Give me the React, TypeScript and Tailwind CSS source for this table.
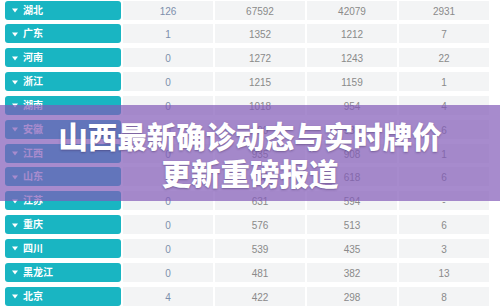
import React from 'react'

type Row = {
  name: string
  add: string
  total: string
  cured: string
  dead: string
}

const rows: Row[] = [
  { name: '湖北', add: '126', total: '67592', cured: '42079', dead: '2931' },
  { name: '广东', add: '1', total: '1352', cured: '1212', dead: '7' },
  { name: '河南', add: '0', total: '1272', cured: '1243', dead: '22' },
  { name: '浙江', add: '0', total: '1215', cured: '1159', dead: '1' },
  { name: '湖南', add: '0', total: '1018', cured: '954', dead: '4' },
  { name: '安徽', add: '0', total: '990', cured: '984', dead: '6' },
  { name: '江西', add: '0', total: '935', cured: '908', dead: '1' },
  { name: '山东', add: '0', total: '760', cured: '618', dead: '6' },
  { name: '江苏', add: '0', total: '631', cured: '594', dead: '-' },
  { name: '重庆', add: '0', total: '576', cured: '513', dead: '6' },
  { name: '四川', add: '0', total: '539', cured: '435', dead: '3' },
  { name: '黑龙江', add: '0', total: '481', cured: '382', dead: '13' },
  { name: '北京', add: '4', total: '422', cured: '298', dead: '8' }
]

const Caret = () => (
  <svg width="6" height="5" viewBox="0 0 6 5" className="shrink-0">
    <path d="M0 0.5 L6 0.5 L3 4.5 Z" fill="#ffffff" />
  </svg>
)

const Cell = ({ value, blue = false }: { value: string; blue?: boolean }) => (
  <div
    className={`w-[90px] h-full bg-[#f3f4f5] flex items-center justify-center pt-[2px] text-[10px] ${
      blue ? 'text-[#7d8fac]' : 'text-[#8a8a8a]'
    }`}
  >
    {value}
  </div>
)

export default function App() {
  return (
    <div
      className="relative w-[500px] h-[307px] overflow-hidden bg-white"
      style={{ fontFamily: '"Liberation Sans", "Noto Sans CJK SC", sans-serif' }}
    >
      {/* province table */}
      <div className="flex flex-col gap-[4.85px] pt-[0.5px] pl-[5px]">
        {rows.map((row) => (
          <div key={row.name} className="flex gap-[2px] h-[19px]">
            <div className="w-[116px] h-full rounded-[3px] bg-[#19b5c2] flex items-center gap-[5px] pl-[7px] pt-[1px]">
              <Caret />
              <span className="text-white text-[10px] font-bold leading-none">{row.name}</span>
            </div>
            <Cell value={row.add} blue />
            <Cell value={row.total} />
            <Cell value={row.cured} />
            <Cell value={row.dead} />
          </div>
        ))}
      </div>

      {/* title banner */}
      <div className="absolute left-0 right-0 top-[104.5px] h-[96.5px] bg-[rgba(130,90,184,0.7)] flex flex-col items-center justify-center pt-[2px]">
        <div
          className="text-white font-black text-[29.5px] leading-[37px] [text-shadow:0_1px_2px_rgba(60,40,90,0.45)]"
          style={{ fontFamily: '"Noto Sans CJK SC", sans-serif' }}
        >
          山西最新确诊动态与实时牌价
        </div>
        <div
          className="text-white font-black text-[29.5px] leading-[37px] [text-shadow:0_1px_2px_rgba(60,40,90,0.45)]"
          style={{ fontFamily: '"Noto Sans CJK SC", sans-serif' }}
        >
          更新重磅报道
        </div>
      </div>
    </div>
  )
}
